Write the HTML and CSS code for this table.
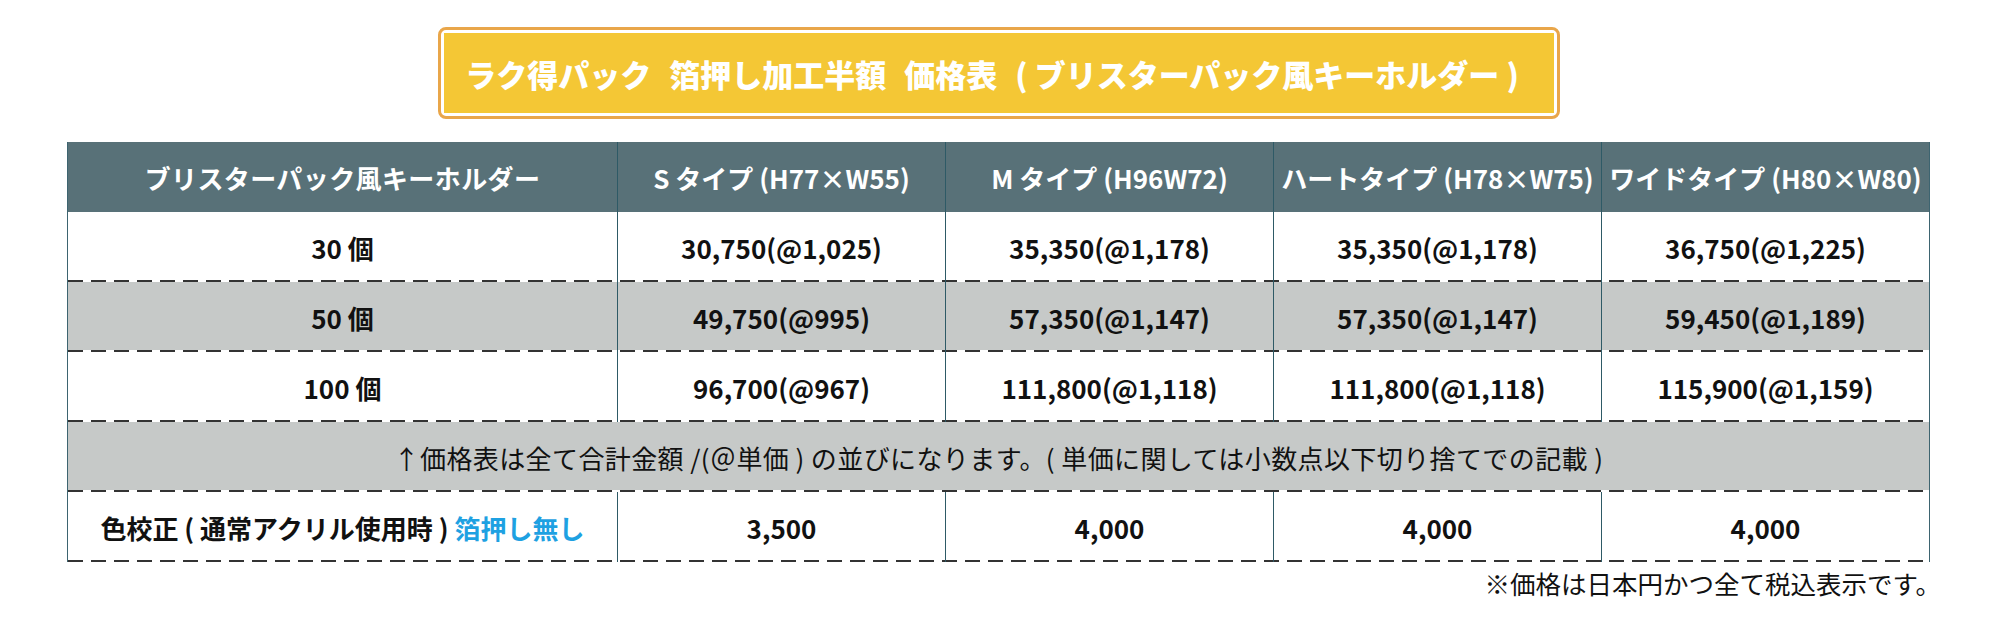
FILE: index.html
```html
<!DOCTYPE html>
<html lang="ja">
<head>
<meta charset="utf-8">
<title>価格表</title>
<link rel="stylesheet" href="styles.css">
</head>
<body>
<div class="page">
  <div class="title-frame">
    <div class="title-inner"><span class="tword">ラク得パック</span><span class="tword">箔押し加工半額</span><span class="tword">価格表</span><span class="tword">( ブリスターパック風キーホルダー )</span></div>
  </div>

  <div class="table">
    <div class="row head">
      <div class="cell">ブリスターパック風キーホルダー</div>
      <div class="cell">S タイプ (H77×W55)</div>
      <div class="cell">M タイプ (H96W72)</div>
      <div class="cell">ハートタイプ (H78×W75)</div>
      <div class="cell">ワイドタイプ (H80×W80)</div>
    </div>
    <div class="row body white">
      <div class="cell">30 個</div>
      <div class="cell">30,750(@1,025)</div>
      <div class="cell">35,350(@1,178)</div>
      <div class="cell">35,350(@1,178)</div>
      <div class="cell">36,750(@1,225)</div>
    </div>
    <div class="row body gray">
      <div class="cell">50 個</div>
      <div class="cell">49,750(@995)</div>
      <div class="cell">57,350(@1,147)</div>
      <div class="cell">57,350(@1,147)</div>
      <div class="cell">59,450(@1,189)</div>
    </div>
    <div class="row body white">
      <div class="cell">100 個</div>
      <div class="cell">96,700(@967)</div>
      <div class="cell">111,800(@1,118)</div>
      <div class="cell">111,800(@1,118)</div>
      <div class="cell">115,900(@1,159)</div>
    </div>
    <div class="row body gray note">
      <div class="cell span">↑価格表は全て合計金額 /(＠単価 ) の並びになります。( 単価に関しては小数点以下切り捨てでの記載 )</div>
    </div>
    <div class="row body white">
      <div class="cell">色校正 ( 通常アクリル使用時 ) <span class="blue">箔押し無し</span></div>
      <div class="cell">3,500</div>
      <div class="cell">4,000</div>
      <div class="cell">4,000</div>
      <div class="cell">4,000</div>
    </div>
  </div>
  <div class="footnote">※価格は日本円かつ全て税込表示です。</div>
</div>
</body>
</html>
```

FILE: styles.css
```css
html, body {
  margin: 0;
  padding: 0;
  background: #ffffff;
}

body {
  font-family: "Noto Sans CJK JP", "Noto Sans", sans-serif;
  color: #111111;
}

.page {
  width: 2000px;
  padding-top: 27px;
}

.title-frame {
  box-sizing: border-box;
  width: 1122px;
  height: 92px;
  margin: 0 0 0 438px;
  border: 3px solid #e9a64a;
  border-radius: 8px;
  padding: 3px;
  background: #ffffff;
}

.title-inner {
  height: 100%;
  background: #f4c735;
  color: #ffffff;
  font-size: 31px;
  font-weight: 900;
  display: flex;
  align-items: center;
  justify-content: center;
  gap: 18px;
  padding-right: 14px;
  white-space: nowrap;
}

.table {
  box-sizing: border-box;
  width: 1863px;
  margin: 23px 0 0 67px;
  border-left: 1px solid #3d6470;
  border-right: 1px solid #3d6470;
}

.row {
  display: grid;
  grid-template-columns: 549px 328px 328px 328px 328px;
  height: 70px;
}

.row.note {
  grid-template-columns: 1fr;
}

.cell {
  display: flex;
  align-items: center;
  justify-content: center;
  font-size: 26px;
  font-weight: 700;
  white-space: nowrap;
}

.cell + .cell {
  border-left: 1px solid #2e5a66;
}

.head {
  background: #587178;
  color: #ffffff;
}

.head .cell:first-child {
  letter-spacing: 0.4px;
}

.body {
  background-image: repeating-linear-gradient(90deg, #333333 0 15px, #ffffff 15px 23px);
  background-size: 100% 2px;
  background-position: left bottom;
  background-repeat: no-repeat;
}

.white {
  background-color: #ffffff;
}

.gray {
  background-color: #c6c9c8;
}

.note .cell {
  font-weight: 400;
  font-size: 26px;
  letter-spacing: 0.4px;
}

.blue {
  color: #1ea1e2;
  margin-left: 6px;
}

.footnote {
  width: 1874px;
  margin-left: 67px;
  margin-top: 6px;
  text-align: right;
  font-size: 25.5px;
  line-height: 30px;
  color: #111111;
}
```
